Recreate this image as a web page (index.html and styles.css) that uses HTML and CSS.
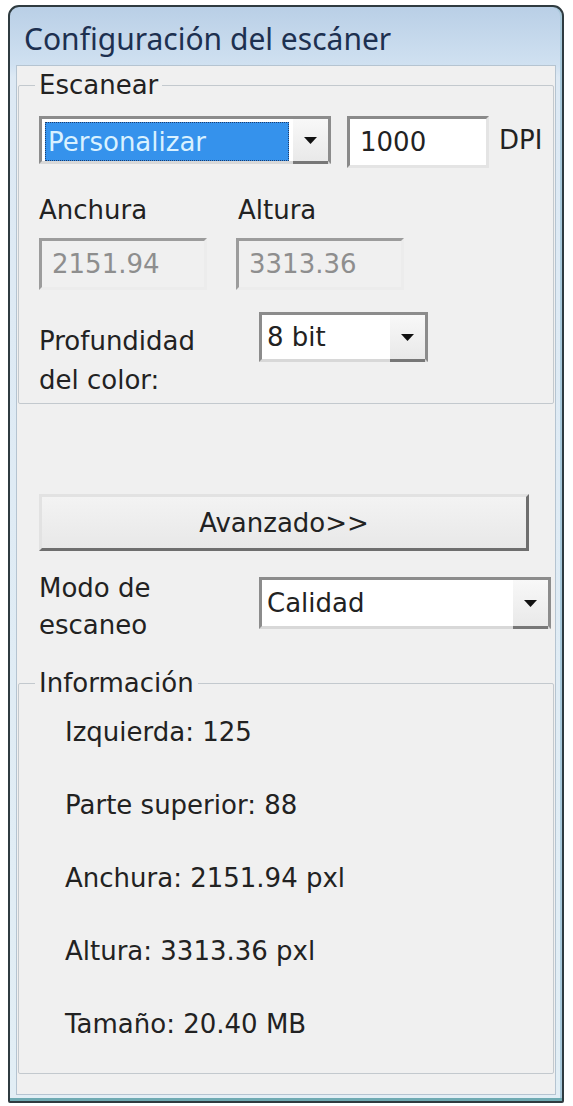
FILE: index.html
```html
<!DOCTYPE html>
<html lang="es">
<head>
    <meta charset="UTF-8">
    <meta name="viewport" content="width=device-width, initial-scale=1.0">
    <title>Configuración del escáner</title>
    <link rel="stylesheet" href="styles.css">
</head>
<body>
    <div class="window">
        <div class="titlebar">Configuración del escáner</div>
        <div class="client">
            <fieldset class="group scan-group">
                <legend>Escanear</legend>

                <div class="preset-row">
                    <div class="combo combo-preset">
                        <span class="combo-value selected">Personalizar</span>
                        <span class="combo-btn">
                            <svg width="13" height="7" viewBox="0 0 13 7"><path d="M0 0h13L6.5 7z"/></svg>
                        </span>
                    </div>
                    <div class="field field-dpi">1000</div>
                    <span class="unit">DPI</span>
                </div>

                <div class="pair-row">
                    <span>Anchura</span>
                    <span>Altura</span>
                </div>
                <div class="pair-row inputs">
                    <div class="field disabled">2151.94</div>
                    <div class="field disabled">3313.36</div>
                </div>

                <div class="option-row depth-row">
                    <label class="option-label">Profundidad<br>del color:</label>
                    <div class="combo combo-depth">
                        <span class="combo-value">8 bit</span>
                        <span class="combo-btn">
                            <svg width="13" height="7" viewBox="0 0 13 7"><path d="M0 0h13L6.5 7z"/></svg>
                        </span>
                    </div>
                </div>
            </fieldset>

            <button type="button" class="advanced">Avanzado&gt;&gt;</button>

            <div class="option-row mode-row">
                <label class="option-label">Modo de<br>escaneo</label>
                <div class="combo combo-mode">
                    <span class="combo-value">Calidad</span>
                    <span class="combo-btn">
                        <svg width="13" height="7" viewBox="0 0 13 7"><path d="M0 0h13L6.5 7z"/></svg>
                    </span>
                </div>
            </div>

            <fieldset class="group info-group">
                <legend>Información</legend>
                <ul class="info-list">
                    <li>Izquierda: 125</li>
                    <li>Parte superior: 88</li>
                    <li>Anchura: 2151.94 pxl</li>
                    <li>Altura: 3313.36 pxl</li>
                    <li>Tamaño: 20.40 MB</li>
                </ul>
            </fieldset>
        </div>
    </div>
</body>
</html>
```

FILE: styles.css
```css
body {
    margin: 0;
    background: #fff;
    font-family: "DejaVu Sans", Tahoma, sans-serif;
    font-size: 26px;
    line-height: 34px;
    color: #222;
}
.window {
    box-sizing: border-box;
    width: 556px;
    height: 1098px;
    margin: 5px 0 0 8px;
    padding: 0 6px 6px;
    border: 2px solid #2f3b40;
    border-radius: 11px 11px 2px 2px;
    background: linear-gradient(#b9cfe6, #d0e1f1 58px, #dde9f4 70px, #e2eef5);
    box-shadow: inset 0 -3px 0 #6faab2, inset -2px 0 0 #a8c8da;
    display: flex;
    flex-direction: column;
}
.titlebar {
    height: 58px;
    padding: 6px 0 0 8px;
    box-sizing: border-box;
    display: flex;
    align-items: center;
    font-family: "Noto Sans", "Open Sans", sans-serif;
    font-size: 30px;
    color: #1d3050;
}
.client {
    flex: 1;
    display: flex;
    flex-direction: column;
    background: #f0f0f0;
    border: 1px solid #b5c4d1;
}
.group {
    margin: 2px 1px 0;
    padding: 13px 20px 3px;
    border: 1px solid #c3c9ce;
    border-radius: 2px;
    min-width: 0;
}
.group legend {
    padding: 0 4px;
    margin-left: -4px;
}

/* scan group */
.preset-row {
    display: flex;
    align-items: center;
    height: 50px;
}
.preset-row > * {
    flex-shrink: 0;
}
.combo {
    box-sizing: border-box;
    display: flex;
    background: #fff;
    border: 3px solid #8c8c8c;
    border-bottom-color: #d8d8d8;
}
.combo-value {
    flex: 1;
    padding-left: 5px;
    display: flex;
    align-items: center;
}
.combo-value.selected {
    margin: 3px 4px 0 3px;
    padding-left: 3px;
    background: #3592ec;
    color: #d9f1ff;
    outline: 1px dotted #1c3d6e;
    outline-offset: -1px;
}
.combo-btn {
    width: 35px;
    display: flex;
    align-items: center;
    justify-content: center;
    background: linear-gradient(#f8f8f8, #e9e9e9);
    border-bottom: 3px solid #777;
    margin-bottom: -3px;
}
.combo-btn svg {
    fill: #111;
}
.combo-preset {
    width: 292px;
    height: 48px;
}
.field {
    box-sizing: border-box;
    display: flex;
    align-items: center;
    padding-left: 10px;
    background: #fff;
    border: 3px solid #e4e4e4;
    border-top-color: #8a8a8a;
    border-left-color: #8a8a8a;
}
.field-dpi {
    width: 142px;
    height: 52px;
    margin: 4px 0 0 16px;
}
.unit {
    margin-left: 10px;
}
.pair-row {
    display: grid;
    grid-template-columns: 199px 1fr;
    margin-top: 28px;
}
.pair-row.inputs {
    grid-template-columns: 197px 168px;
    margin-top: 11px;
}
.field.disabled {
    width: 168px;
    height: 52px;
    background: #f0f0f0;
    color: #8e8e8e;
    border-color: #ececec;
    border-top-color: #9c9c9c;
    border-left-color: #9c9c9c;
}
.option-row {
    display: flex;
    align-items: flex-start;
}
.option-label {
    width: 220px;
    flex-shrink: 0;
}
.depth-row {
    margin-top: 22px;
}
.depth-row .option-label {
    margin-top: 10px;
    line-height: 39px;
}
.combo-depth {
    width: 169px;
    height: 50px;
}

.advanced {
    margin: 90px 0 0 22px;
    width: 490px;
    height: 57px;
    font-family: inherit;
    font-size: 26px;
    color: #222;
    background: linear-gradient(#f3f3f3, #e8e8e8);
    border: 3px solid #6e6e6e;
    border-top-color: #e2e2e2;
    border-left-color: #e2e2e2;
    padding: 0;
}

.mode-row {
    margin: 19px 0 0 22px;
}
.mode-row .option-label {
    line-height: 37px;
}
.combo-mode {
    width: 292px;
    height: 52px;
    margin-top: 7px;
}

.info-group {
    margin-top: 22px;
    padding-top: 15px;
    padding-bottom: 32px;
}
.info-list {
    list-style: none;
    margin: 0;
    padding: 0 0 0 26px;
    display: flex;
    flex-direction: column;
    gap: 39px;
}
```
